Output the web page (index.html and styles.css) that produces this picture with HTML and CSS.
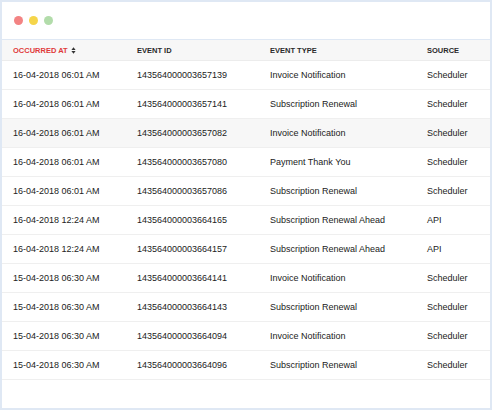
FILE: index.html
```html
<!DOCTYPE html>
<html>
<head>
<meta charset="utf-8">
<link rel="stylesheet" href="styles.css">
</head>
<body>
<div class="window">
  <div class="titlebar">
    <span class="dot red"></span>
    <span class="dot yellow"></span>
    <span class="dot green"></span>
  </div>
  <table class="events">
    <thead>
      <tr>
        <th class="c1 sorted">OCCURRED AT <svg class="sort" width="5" height="7" viewBox="0 0 5 7"><path d="M2.5 0.3L4.6 3H0.4Z M2.5 6.7L4.6 4H0.4Z" fill="#333"/></svg></th>
        <th class="c2">EVENT ID</th>
        <th class="c3">EVENT TYPE</th>
        <th class="c4">SOURCE</th>
      </tr>
    </thead>
    <tbody>
      <tr><td>16-04-2018 06:01 AM</td><td>143564000003657139</td><td>Invoice Notification</td><td>Scheduler</td></tr>
      <tr><td>16-04-2018 06:01 AM</td><td>143564000003657141</td><td>Subscription Renewal</td><td>Scheduler</td></tr>
      <tr class="hover"><td>16-04-2018 06:01 AM</td><td>143564000003657082</td><td>Invoice Notification</td><td>Scheduler</td></tr>
      <tr><td>16-04-2018 06:01 AM</td><td>143564000003657080</td><td>Payment Thank You</td><td>Scheduler</td></tr>
      <tr><td>16-04-2018 06:01 AM</td><td>143564000003657086</td><td>Subscription Renewal</td><td>Scheduler</td></tr>
      <tr><td>16-04-2018 12:24 AM</td><td>143564000003664165</td><td>Subscription Renewal Ahead</td><td>API</td></tr>
      <tr><td>16-04-2018 12:24 AM</td><td>143564000003664157</td><td>Subscription Renewal Ahead</td><td>API</td></tr>
      <tr><td>15-04-2018 06:30 AM</td><td>143564000003664141</td><td>Invoice Notification</td><td>Scheduler</td></tr>
      <tr><td>15-04-2018 06:30 AM</td><td>143564000003664143</td><td>Subscription Renewal</td><td>Scheduler</td></tr>
      <tr><td>15-04-2018 06:30 AM</td><td>143564000003664094</td><td>Invoice Notification</td><td>Scheduler</td></tr>
      <tr><td>15-04-2018 06:30 AM</td><td>143564000003664096</td><td>Subscription Renewal</td><td>Scheduler</td></tr>
    </tbody>
  </table>
</div>
</body>
</html>
```

FILE: styles.css
```css
html, body {
  margin: 0;
  padding: 0;
  background: #ffffff;
}
body {
  font-family: "Liberation Sans", Arial, sans-serif;
  color: #222;
}
.window {
  box-sizing: border-box;
  width: 492px;
  height: 410px;
  border: 2px solid #dfe8f4;
  background: #fff;
}
.titlebar {
  height: 38px;
  border-bottom: 1px solid #dfe8f4;
  display: flex;
  align-items: center;
  gap: 6px;
  padding-left: 12px;
  padding-bottom: 1px;
  box-sizing: border-box;
}
.dot {
  width: 9px;
  height: 9px;
  border-radius: 50%;
  display: inline-block;
}
.red { background: #f38383; }
.yellow { background: #f5d54a; }
.green { background: #b2dcaa; }
.events {
  width: 100%;
  border-collapse: collapse;
  table-layout: fixed;
}
.events th {
  background: #f7f7f7;
  height: 20px;
  font-size: 7.5px;
  font-weight: 700;
  text-align: left;
  color: #2a2a2a;
  padding: 0;
  border-bottom: 1px solid #ececec;
}
.events th.sorted { color: #e03a3a; }
.sort { vertical-align: -1px; margin-left: 1px; }
.events td {
  height: 28px;
  font-size: 9px;
  padding: 0;
  border-bottom: 1px solid #efefef;
  color: #222;
  white-space: nowrap;
}
.events tr.hover td { background: #f7f7f7; }
.events th:nth-child(1), .events td:nth-child(1) { width: 124px; padding-left: 11px; }
.events th:nth-child(2), .events td:nth-child(2) { width: 133px; }
.events th:nth-child(3), .events td:nth-child(3) { width: 157px; }
```
